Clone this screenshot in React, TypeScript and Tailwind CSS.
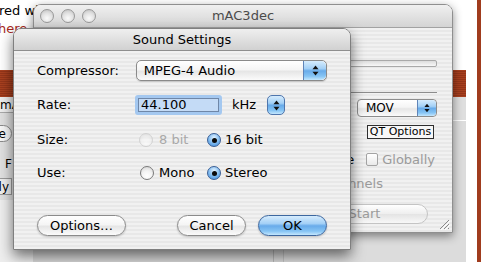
import React from "react";

// aqua pinstripe used by both windows
const pinstripe =
  "bg-[repeating-linear-gradient(180deg,#f1f1f1_0px,#f1f1f1_2px,#e8e8e8_2px,#e8e8e8_4px)]";
const aquaBlue =
  "bg-[linear-gradient(180deg,#d6ecfd_0%,#a3d0f6_40%,#68abea_52%,#86c4f4_80%,#c4e7fe_100%)]";
const aquaWhite =
  "bg-[linear-gradient(180deg,#ffffff_0%,#f5f5f5_45%,#e6e6e6_55%,#fbfbfb_100%)]";

const UpDown: React.FC<{ small?: boolean }> = ({ small }) => (
  <svg width={small ? 6 : 7} height={small ? 10 : 11} viewBox="0 0 7 11">
    <path d="M3.5 0.5L6.5 4.2H0.5z" fill="#111" />
    <path d="M3.5 10.5L0.5 6.8H6.5z" fill="#111" />
  </svg>
);

const Radio: React.FC<{ on?: boolean; disabled?: boolean }> = ({ on, disabled }) => {
  if (on) {
    return (
      <span className="flex h-[14px] w-[14px] shrink-0 items-center justify-center rounded-full border border-[#3a5f96] bg-[radial-gradient(circle_at_50%_30%,#e2f2ff_0%,#7db9ef_55%,#3f8ad9_100%)]">
        <span className="h-[5px] w-[5px] rounded-full bg-[#0b0b0b]" />
      </span>
    );
  }
  return (
    <span
      className={`h-[14px] w-[14px] shrink-0 rounded-full border bg-[radial-gradient(circle_at_50%_75%,#ffffff_0%,#f4f4f4_45%,#d2d2d2_100%)] ${
        disabled ? "border-[#c2c2c2] opacity-60" : "border-[#7a7a7a]"
      }`}
    />
  );
};

const PushButton: React.FC<{ label: string; width: string; primary?: boolean }> = ({
  label,
  width,
  primary,
}) => (
  <div
    className={`flex h-[21px] items-center justify-center rounded-full border shadow-[0_1px_2px_rgba(0,0,0,0.2)] ${width} ${
      primary ? `border-[#3d679f] ${aquaBlue}` : `border-[#8b8b8b] ${aquaWhite}`
    }`}
  >
    {label}
  </div>
);

function BackPage() {
  return (
    <div className="flex h-full">
      <div className="flex w-[466px] flex-col">
        <div className="h-[70px] pt-[2px] leading-[18px]">
          <p className="-ml-[1px] whitespace-nowrap">red with mAC3dec</p>
          <p className="-ml-[2px] text-[#a6261d]">here</p>
        </div>
        <div className="h-[27px] bg-[repeating-linear-gradient(180deg,#a8401f_0px,#a8401f_1px,#943519_1px,#943519_2px)]" />
        <div className="flex flex-1">
          {/* another window peeking out on the left */}
          <div className="flex w-[33px] flex-col bg-[#e0e0e0] text-[12px]">
            <div className="h-[16px] border-b border-[#a9a9a9] bg-[#eeeeee] leading-[16px]">mAC3</div>
            <div className="-ml-[40px] mt-[12px] flex h-[17px] w-[52px] items-center justify-end rounded-full border border-[#8b8b8b] bg-[#f6f6f6] pr-[5px]">
              Browse
            </div>
            <div className="ml-[5px] mt-[13px]">F</div>
            <div className="-ml-[30px] mt-[5px] flex h-[17px] w-[42px] items-center justify-end border border-[#9a9a9a] bg-[#ededed] pr-[2px]">
              Strictly
            </div>
            <div className="mt-[5px] flex-1 bg-[#eeeeee]" />
          </div>
          <div className="flex flex-1 flex-col bg-[#d9d9d9]">
            <div className="h-[23px] bg-[#dedede]" />
            <div className="h-px bg-white" />
            <div className="flex flex-1">
              <div className="w-[240px]" />
              <div className="w-[10px] border-l border-[#b8b8b8]" />
              <div className="flex-1 border-l border-[#c4c4c4] bg-[#dcdcdc]" />
            </div>
          </div>
        </div>
      </div>
      <div className="w-[11px] bg-white" />
      <div className="flex-1 bg-[#a03c1e]" />
    </div>
  );
}

function MainWindow() {
  return (
    <div className="absolute left-[33px] top-[4px] flex h-[229px] w-[420px] flex-col overflow-hidden rounded-t-[8px] border border-[#8f8f8f] shadow-[0_3px_10px_rgba(0,0,0,0.45)]">
      <div className="relative flex h-[23px] shrink-0 items-center border-b border-[#a2a2a2] bg-[linear-gradient(180deg,#f0f0f0,#d4d4d4)] px-[6px]">
        <div className="flex gap-[7px]">
          {[0, 1, 2].map((i) => (
            <span
              key={i}
              className="h-[14px] w-[14px] rounded-full border border-[#999999] bg-[radial-gradient(circle_at_50%_70%,#fbfbfb_0%,#e2e2e2_50%,#bcbcbc_100%)]"
            />
          ))}
        </div>
        <span className="absolute inset-x-0 text-center text-[#4b4b4b]">mAC3dec</span>
      </div>
      <div className={`relative flex flex-1 flex-col items-end pr-[15px] ${pinstripe}`}>
        <div className="mt-[32px] h-[7px] w-[240px] rounded-[2px] border border-[#a9a9a9] bg-[linear-gradient(180deg,#dcdcdc,#f8f8f8)]" />
        <div className="mt-[25px] h-px w-[240px] bg-[#8c8c8c]" />
        <div className={`mt-[6px] flex h-[18px] w-[80px] items-center rounded-[4px] border border-[#8c8c8c] ${aquaWhite}`}>
          <span className="flex-1 pl-[8px] text-[12px]">MOV</span>
          <span className={`flex h-full w-[19px] items-center justify-center rounded-r-[4px] border-l border-[#5f84b8] ${aquaBlue}`}>
            <UpDown small />
          </span>
        </div>
        <div className="mr-[3px] mt-[8px] flex h-[14px] w-[67px] items-center justify-center whitespace-nowrap border border-[#2e2e2e] bg-[#f7f7f7] text-[11px]">
          QT Options
        </div>
        <div className="mr-[2px] mt-[14px] flex h-[13px] items-center whitespace-nowrap">
          <span>Normalize</span>
          <span className="ml-[12px] h-[13px] w-[12px] rounded-[2px] border border-[#a3a3a3] bg-[linear-gradient(180deg,#ffffff,#e9e9e9)]" />
          <span className="ml-[4px] text-[#9b9b9b]">Globally</span>
        </div>
        <div className="mr-[54px] mt-[8px] whitespace-nowrap text-[#9b9b9b]">Mix channels</div>
        <div className="mr-[9px] mt-[10px] flex h-[20px] w-[127px] items-center justify-center rounded-full border border-[#c4c4c4] bg-[linear-gradient(180deg,#ffffff,#eeeeee_50%,#e4e4e4_52%,#f8f8f8)] text-[#9b9b9b]">
          Start
        </div>
        <svg className="absolute bottom-[2px] right-[2px]" width="12" height="12" viewBox="0 0 12 12">
          <path d="M11 2L2 11M11 6L6 11M11 10L10 11" stroke="#8a8a8a" strokeWidth="1" />
          <path d="M12 3L3 12M12 7L7 12" stroke="#ffffff" strokeWidth="1" />
        </svg>
      </div>
    </div>
  );
}

function SoundSettings() {
  return (
    <div className="absolute left-[13px] top-[28px] flex h-[222px] w-[338px] flex-col overflow-hidden rounded-t-[8px] border border-[#7f7f7f] shadow-[0_6px_14px_rgba(0,0,0,0.55)]">
      <div className="flex h-[22px] shrink-0 items-center justify-center border-b border-[#8e8e8e] bg-[linear-gradient(180deg,#efefef,#d1d1d1)]">
        Sound Settings
      </div>
      <div className={`flex flex-1 flex-col px-[23px] pt-[9px] ${pinstripe}`}>
        {/* compressor */}
        <div className="flex h-[21px] items-center">
          <span className="w-[98px]">Compressor:</span>
          <div className={`ml-[5px] flex h-[21px] w-[200px] items-center rounded-[5px] border border-[#8a8a8a] shadow-[0_1px_1px_rgba(0,0,0,0.15)] ${aquaWhite}`}>
            <span className="flex-1 pl-[7px]">MPEG-4 Audio</span>
            <span className={`flex h-full w-[23px] items-center justify-center rounded-r-[5px] border-l border-[#5f84b8] ${aquaBlue}`}>
              <UpDown />
            </span>
          </div>
        </div>

        {/* rate */}
        <div className="mt-[14px] flex h-[20px] items-center">
          <span className="w-[98px]">Rate:</span>
          <div className="h-[20px] w-[87px] rounded-[3px] border-[3px] border-[#a4c8f0]">
            <div className="flex h-full items-center border border-[#6f87a8] bg-[#c4dbf6] pl-[2px]">44.100</div>
          </div>
          <span className="ml-[10px]">kHz</span>
          <span className={`ml-[11px] flex h-[20px] w-[18px] items-center justify-center rounded-[5px] border border-[#4f76ad] ${aquaBlue}`}>
            <UpDown />
          </span>
        </div>

        {/* size */}
        <div className="mt-[18px] flex h-[14px] items-center">
          <span className="w-[98px]">Size:</span>
          <div className="ml-[4px] flex w-[68px] items-center gap-[6px] text-[#a8a8a8]">
            <Radio disabled />
            <span>8 bit</span>
          </div>
          <div className="flex items-center gap-[4px]">
            <Radio on />
            <span>16 bit</span>
          </div>
        </div>

        {/* use */}
        <div className="mt-[19px] flex h-[14px] items-center">
          <span className="w-[98px]">Use:</span>
          <div className="ml-[5px] flex w-[67px] items-center gap-[5px]">
            <Radio />
            <span>Mono</span>
          </div>
          <div className="flex items-center gap-[4px]">
            <Radio on />
            <span>Stereo</span>
          </div>
        </div>

        <div className="mt-[35px] flex items-center">
          <PushButton label="Options…" width="w-[89px]" />
          <div className="flex-1" />
          <PushButton label="Cancel" width="w-[69px]" />
          <div className="w-[12px]" />
          <PushButton label="OK" width="w-[69px]" primary />
        </div>
      </div>
    </div>
  );
}

export default function App() {
  return (
    <div className="relative h-[262px] w-[481px] overflow-hidden bg-white font-['DejaVu_Sans',sans-serif] text-[13px] text-black">
      <BackPage />
      <MainWindow />
      <SoundSettings />
    </div>
  );
}
